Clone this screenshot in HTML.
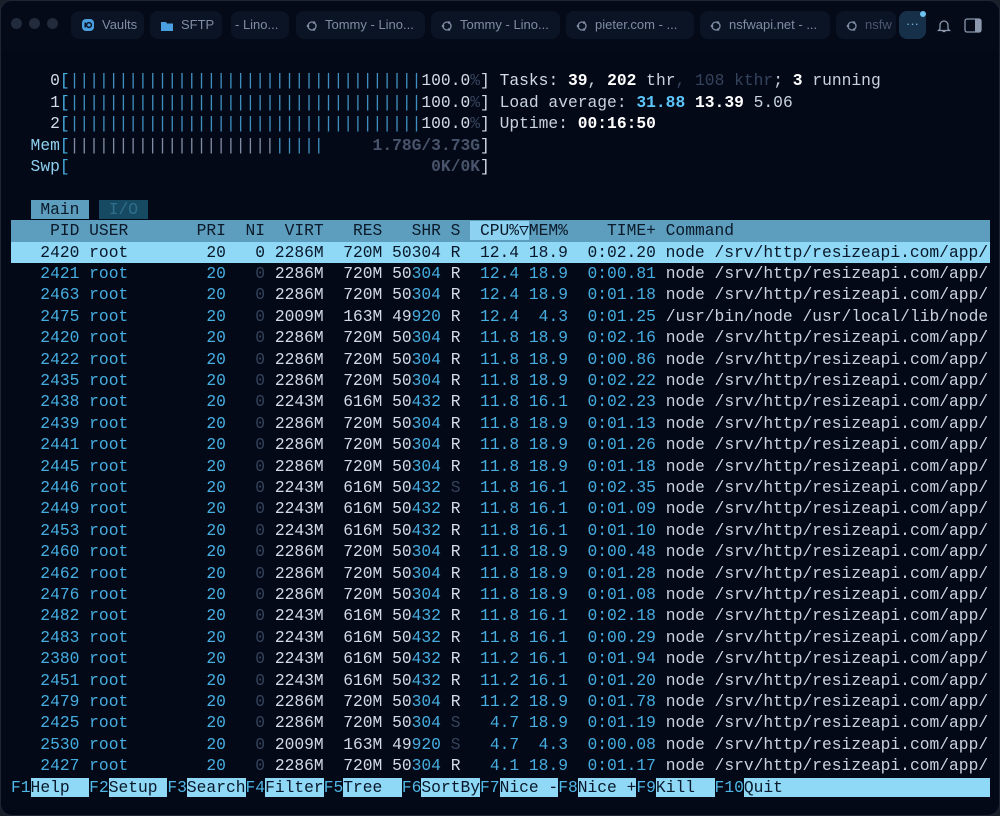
<!DOCTYPE html>
<html><head><meta charset="utf-8"><style>
*{margin:0;padding:0;box-sizing:border-box}
html,body{width:1000px;height:816px;background:#1a1f2a;overflow:hidden}
.win{position:absolute;left:0;top:0;width:1000px;height:816px;background:#040917;border-radius:12px;overflow:hidden;border:1px solid #1e2636}
.top{position:absolute;left:0;top:0;width:1000px;height:50px;background:#050a18;font-family:"Liberation Sans",sans-serif;font-size:13px;color:#7f8ca3}
.dot{position:absolute;top:17px;width:11px;height:11px;border-radius:50%;background:#222b3b}
.pill{position:absolute;top:10px;height:28px;border-radius:8px;background:#0b1425;line-height:28px;padding-left:10px;white-space:nowrap;overflow:hidden}
.pill svg{vertical-align:-3px;margin-right:7px}
.term{position:absolute;left:10px;top:69.3px;font-family:"Liberation Mono",monospace;font-size:16.3px;line-height:21.42px;color:#c9d3e0}
.r{height:21.42px;width:979px;white-space:pre;overflow:hidden}
.b{color:#46ade0}.g{color:#34435c}.w{color:#d3dbe6}.d{color:#48546b;font-weight:bold}.bb{color:#3d8fbf}
.sel{background:#8fd8f6;color:#08182a}
.hdr{background:#5d9dbd;color:#0a1a2a}
.hc{background:#8dd2f0}
.k{color:#4fb6e6}.l{background:#8fd8f6;color:#08182a}
.W{color:#fff;font-weight:bold}.B{color:#5cc6fb;font-weight:bold}
</style></head><body><div class="win">
<div class="top">
<div class="dot" style="left:10px"></div><div class="dot" style="left:28px"></div><div class="dot" style="left:46px"></div>
<div class="pill" style="left:70px;width:73px"><svg width="14" height="14" viewBox="0 0 14 14"><rect x="1" y="1" width="12" height="12" rx="4" fill="#4a9fe0"/><circle cx="8" cy="7" r="2.4" fill="none" stroke="#0b1425" stroke-width="1.5"/><rect x="3.5" y="4.5" width="1.5" height="5" fill="#0b1425"/></svg>Vaults</div>
<div class="pill" style="left:149px;width:72px"><svg width="14" height="12" viewBox="0 0 14 12"><path d="M1 2h5l1 1.5h6V11H1z" fill="#4a9fe0"/></svg>SFTP</div>
<div class="pill" style="left:230px;width:58px;padding-left:4px">- Lino...</div>
<div class="pill" style="left:295px;width:129px"><svg width="12" height="12" viewBox="0 0 12 12"><circle cx="6" cy="6" r="4" fill="none" stroke="#7f8ca3" stroke-width="1.3"/><circle cx="2" cy="6" r="1.3" fill="#7f8ca3"/><circle cx="8" cy="2.5" r="1.3" fill="#7f8ca3"/><circle cx="8" cy="9.5" r="1.3" fill="#7f8ca3"/></svg>Tommy - Lino...</div>
<div class="pill" style="left:430px;width:129px"><svg width="12" height="12" viewBox="0 0 12 12"><circle cx="6" cy="6" r="4" fill="none" stroke="#7f8ca3" stroke-width="1.3"/><circle cx="2" cy="6" r="1.3" fill="#7f8ca3"/><circle cx="8" cy="2.5" r="1.3" fill="#7f8ca3"/><circle cx="8" cy="9.5" r="1.3" fill="#7f8ca3"/></svg>Tommy - Lino...</div>
<div class="pill" style="left:565px;width:128px"><svg width="12" height="12" viewBox="0 0 12 12"><circle cx="6" cy="6" r="4" fill="none" stroke="#7f8ca3" stroke-width="1.3"/><circle cx="2" cy="6" r="1.3" fill="#7f8ca3"/><circle cx="8" cy="2.5" r="1.3" fill="#7f8ca3"/><circle cx="8" cy="9.5" r="1.3" fill="#7f8ca3"/></svg>pieter.com - ...</div>
<div class="pill" style="left:699px;width:130px"><svg width="12" height="12" viewBox="0 0 12 12"><circle cx="6" cy="6" r="4" fill="none" stroke="#7f8ca3" stroke-width="1.3"/><circle cx="2" cy="6" r="1.3" fill="#7f8ca3"/><circle cx="8" cy="2.5" r="1.3" fill="#7f8ca3"/><circle cx="8" cy="9.5" r="1.3" fill="#7f8ca3"/></svg>nsfwapi.net - ...</div>
<div class="pill" style="left:835px;width:60px;color:#4a5670"><svg width="12" height="12" viewBox="0 0 12 12"><circle cx="6" cy="6" r="4" fill="none" stroke="#7f8ca3" stroke-width="1.3"/><circle cx="2" cy="6" r="1.3" fill="#7f8ca3"/><circle cx="8" cy="2.5" r="1.3" fill="#7f8ca3"/><circle cx="8" cy="9.5" r="1.3" fill="#7f8ca3"/></svg>nsfw</div>
<div style="position:absolute;left:898px;top:10px;width:27px;height:28px;border-radius:8px;background:#17304a;color:#6fb3e0;text-align:center;line-height:26px;font-size:13px">···</div>
<div style="position:absolute;left:919px;top:10px;width:6px;height:6px;border-radius:50%;background:#6fc2f0"></div>
<svg style="position:absolute;left:936px;top:17px" width="14" height="15" viewBox="0 0 14 15"><path d="M3 11V7a4 4 0 0 1 8 0v4l1.5 1.5h-11z" fill="none" stroke="#8a97ad" stroke-width="1.3"/><path d="M5.5 13.5h3" stroke="#8a97ad" stroke-width="1.3"/></svg>
<svg style="position:absolute;left:963px;top:17px" width="18" height="15" viewBox="0 0 18 15"><rect x="1" y="1" width="16" height="13" rx="2" fill="none" stroke="#8a97ad" stroke-width="1.3"/><rect x="11" y="1" width="6" height="13" fill="#8a97ad"/></svg>
</div>
<div class="term"><div class="r">    <span class="w">0</span><span class="b">[</span><span class="bb">||||||||||||||||||||||||||||||||||||</span><span class="w">100.0</span><span class="g">%</span><span class="w">]</span> <span class="w">Tasks: </span><span class="W">39</span>, <span class="W">202</span> thr<span class="g">, 108 kthr</span>; <span class="W">3</span> running</div><div class="r">    <span class="w">1</span><span class="b">[</span><span class="bb">||||||||||||||||||||||||||||||||||||</span><span class="w">100.0</span><span class="g">%</span><span class="w">]</span> Load average: <span class="B">31.88</span> <span class="W">13.39</span> 5.06</div><div class="r">    <span class="w">2</span><span class="b">[</span><span class="bb">||||||||||||||||||||||||||||||||||||</span><span class="w">100.0</span><span class="g">%</span><span class="w">]</span> Uptime: <span class="W">00:16:50</span></div><div class="r">  <span style="color:#8fd0f0">Mem</span><span class="b">[</span><span style="color:#7f8ca3">|||||||||||||||||||||</span><span class="bb">|||||</span>     <span class="d">1.78G/3.73G</span><span class="w">]</span></div><div class="r">  <span style="color:#8fd0f0">Swp</span><span class="b">[</span>                                     <span class="d">0K/0K</span><span class="w">]</span></div><div class="r"> </div><div class="r">  <span class="hdr"> Main </span> <span style="background:#164a63;color:#2f6e8c"> I/O </span></div><div class="r hdr">    PID USER       PRI  NI  VIRT   RES   SHR S <span class="hc"> CPU%▽</span>MEM%    TIME+ Command                                </div><div class="r sel">   2420 root        20   0 2286M  720M 50304 R  12.4 18.9  0:02.20 node /srv/http/resizeapi.com/app/</div><div class="r"><span class="b">   2421 root        20</span>   <span class="g">0</span> <span class="w">2286M  720M 50</span><span class="b">304</span> <span class="w">R</span>  <span class="b">12.4 18.9  0:00.81</span> node /srv/http/resizeapi.com/app/</div><div class="r"><span class="b">   2463 root        20</span>   <span class="g">0</span> <span class="w">2286M  720M 50</span><span class="b">304</span> <span class="w">R</span>  <span class="b">12.4 18.9  0:01.18</span> node /srv/http/resizeapi.com/app/</div><div class="r"><span class="b">   2475 root        20</span>   <span class="g">0</span> <span class="w">2009M  163M 49</span><span class="b">920</span> <span class="w">R</span>  <span class="b">12.4  4.3  0:01.25</span> /usr/bin/node /usr/local/lib/node</div><div class="r"><span class="b">   2420 root        20</span>   <span class="g">0</span> <span class="w">2286M  720M 50</span><span class="b">304</span> <span class="w">R</span>  <span class="b">11.8 18.9  0:02.16</span> node /srv/http/resizeapi.com/app/</div><div class="r"><span class="b">   2422 root        20</span>   <span class="g">0</span> <span class="w">2286M  720M 50</span><span class="b">304</span> <span class="w">R</span>  <span class="b">11.8 18.9  0:00.86</span> node /srv/http/resizeapi.com/app/</div><div class="r"><span class="b">   2435 root        20</span>   <span class="g">0</span> <span class="w">2286M  720M 50</span><span class="b">304</span> <span class="w">R</span>  <span class="b">11.8 18.9  0:02.22</span> node /srv/http/resizeapi.com/app/</div><div class="r"><span class="b">   2438 root        20</span>   <span class="g">0</span> <span class="w">2243M  616M 50</span><span class="b">432</span> <span class="w">R</span>  <span class="b">11.8 16.1  0:02.23</span> node /srv/http/resizeapi.com/app/</div><div class="r"><span class="b">   2439 root        20</span>   <span class="g">0</span> <span class="w">2286M  720M 50</span><span class="b">304</span> <span class="w">R</span>  <span class="b">11.8 18.9  0:01.13</span> node /srv/http/resizeapi.com/app/</div><div class="r"><span class="b">   2441 root        20</span>   <span class="g">0</span> <span class="w">2286M  720M 50</span><span class="b">304</span> <span class="w">R</span>  <span class="b">11.8 18.9  0:01.26</span> node /srv/http/resizeapi.com/app/</div><div class="r"><span class="b">   2445 root        20</span>   <span class="g">0</span> <span class="w">2286M  720M 50</span><span class="b">304</span> <span class="w">R</span>  <span class="b">11.8 18.9  0:01.18</span> node /srv/http/resizeapi.com/app/</div><div class="r"><span class="b">   2446 root        20</span>   <span class="g">0</span> <span class="w">2243M  616M 50</span><span class="b">432</span> <span class="g">S</span>  <span class="b">11.8 16.1  0:02.35</span> node /srv/http/resizeapi.com/app/</div><div class="r"><span class="b">   2449 root        20</span>   <span class="g">0</span> <span class="w">2243M  616M 50</span><span class="b">432</span> <span class="w">R</span>  <span class="b">11.8 16.1  0:01.09</span> node /srv/http/resizeapi.com/app/</div><div class="r"><span class="b">   2453 root        20</span>   <span class="g">0</span> <span class="w">2243M  616M 50</span><span class="b">432</span> <span class="w">R</span>  <span class="b">11.8 16.1  0:01.10</span> node /srv/http/resizeapi.com/app/</div><div class="r"><span class="b">   2460 root        20</span>   <span class="g">0</span> <span class="w">2286M  720M 50</span><span class="b">304</span> <span class="w">R</span>  <span class="b">11.8 18.9  0:00.48</span> node /srv/http/resizeapi.com/app/</div><div class="r"><span class="b">   2462 root        20</span>   <span class="g">0</span> <span class="w">2286M  720M 50</span><span class="b">304</span> <span class="w">R</span>  <span class="b">11.8 18.9  0:01.28</span> node /srv/http/resizeapi.com/app/</div><div class="r"><span class="b">   2476 root        20</span>   <span class="g">0</span> <span class="w">2286M  720M 50</span><span class="b">304</span> <span class="w">R</span>  <span class="b">11.8 18.9  0:01.08</span> node /srv/http/resizeapi.com/app/</div><div class="r"><span class="b">   2482 root        20</span>   <span class="g">0</span> <span class="w">2243M  616M 50</span><span class="b">432</span> <span class="w">R</span>  <span class="b">11.8 16.1  0:02.18</span> node /srv/http/resizeapi.com/app/</div><div class="r"><span class="b">   2483 root        20</span>   <span class="g">0</span> <span class="w">2243M  616M 50</span><span class="b">432</span> <span class="w">R</span>  <span class="b">11.8 16.1  0:00.29</span> node /srv/http/resizeapi.com/app/</div><div class="r"><span class="b">   2380 root        20</span>   <span class="g">0</span> <span class="w">2243M  616M 50</span><span class="b">432</span> <span class="w">R</span>  <span class="b">11.2 16.1  0:01.94</span> node /srv/http/resizeapi.com/app/</div><div class="r"><span class="b">   2451 root        20</span>   <span class="g">0</span> <span class="w">2243M  616M 50</span><span class="b">432</span> <span class="w">R</span>  <span class="b">11.2 16.1  0:01.20</span> node /srv/http/resizeapi.com/app/</div><div class="r"><span class="b">   2479 root        20</span>   <span class="g">0</span> <span class="w">2286M  720M 50</span><span class="b">304</span> <span class="w">R</span>  <span class="b">11.2 18.9  0:01.78</span> node /srv/http/resizeapi.com/app/</div><div class="r"><span class="b">   2425 root        20</span>   <span class="g">0</span> <span class="w">2286M  720M 50</span><span class="b">304</span> <span class="g">S</span>  <span class="b"> 4.7 18.9  0:01.19</span> node /srv/http/resizeapi.com/app/</div><div class="r"><span class="b">   2530 root        20</span>   <span class="g">0</span> <span class="w">2009M  163M 49</span><span class="b">920</span> <span class="g">S</span>  <span class="b"> 4.7  4.3  0:00.08</span> node /srv/http/resizeapi.com/app/</div><div class="r"><span class="b">   2427 root        20</span>   <span class="g">0</span> <span class="w">2286M  720M 50</span><span class="b">304</span> <span class="w">R</span>  <span class="b"> 4.1 18.9  0:01.17</span> node /srv/http/resizeapi.com/app/</div><div class="r"><span class="k">F1</span><span class="l">Help  </span><span class="k">F2</span><span class="l">Setup </span><span class="k">F3</span><span class="l">Search</span><span class="k">F4</span><span class="l">Filter</span><span class="k">F5</span><span class="l">Tree  </span><span class="k">F6</span><span class="l">SortBy</span><span class="k">F7</span><span class="l">Nice -</span><span class="k">F8</span><span class="l">Nice +</span><span class="k">F9</span><span class="l">Kill  </span><span class="k">F10</span><span class="l">Quit                          </span></div></div>
</div></body></html>
